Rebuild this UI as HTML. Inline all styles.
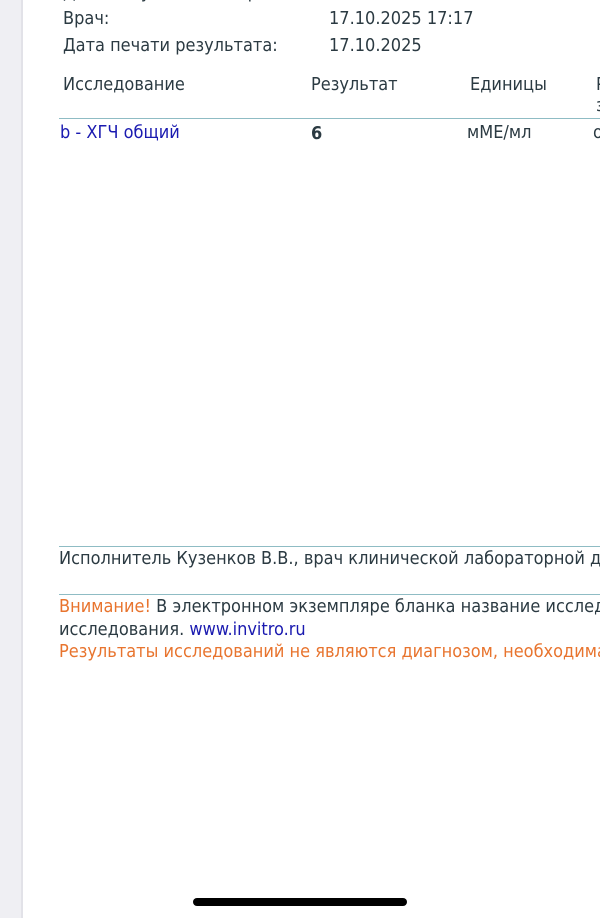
<!DOCTYPE html>
<html><head><meta charset="utf-8"><style>
html,body{margin:0;width:600px;height:918px;overflow:hidden;}
body{background:#fff;position:relative;font-family:Tahoma,"DejaVu Sans Condensed","Liberation Sans",sans-serif;color:#2b3a42;}
.strip{position:absolute;left:0;top:0;width:21px;height:918px;background:#efeff3;border-right:2px solid #e2e2e8;}
.t{position:absolute;white-space:nowrap;font-size:18px;line-height:20px;}
.line{position:absolute;left:59px;width:541px;height:1px;background:#8fbcc4;}
.blue{color:#1a1ab0}
.or{color:#e8742e}
.bar{position:absolute;left:193px;top:898px;width:214px;height:8px;border-radius:4px;background:#000;}
.clip{position:absolute;left:0;top:0;width:600px;height:918px;overflow:hidden;}
</style></head><body>
<div class="clip">
<div class="strip"></div>
<div class="t" style="left:63px;top:-17px">Дата получения материала:</div>
<div class="t" style="left:63px;top:9px">Врач:</div>
<div class="t" style="left:329px;top:9px">17.10.2025 17:17</div>
<div class="t" style="left:63px;top:36px">Дата печати результата:</div>
<div class="t" style="left:329px;top:36px">17.10.2025</div>
<div class="t" style="left:63px;top:75px">Исследование</div>
<div class="t" style="left:311px;top:75px">Результат</div>
<div class="t" style="left:470px;top:75px">Единицы</div>
<div class="t" style="left:596px;top:75px">Р</div>
<div class="t" style="left:596px;top:96px">з</div>
<div class="line" style="top:118px"></div>
<div class="t blue" style="left:60px;top:123px">b - ХГЧ общий</div>
<div class="t" style="left:311px;top:124px;font-weight:bold">6</div>
<div class="t" style="left:467px;top:123px">мМЕ/мл</div>
<div class="t" style="left:593px;top:123px">о</div>
<div class="line" style="top:546px"></div>
<div class="t" style="left:59px;top:549px">Исполнитель Кузенков В.В., врач клинической лабораторной диагностики</div>
<div class="line" style="top:594px"></div>
<div class="t" style="left:59px;top:597px"><span class="or">Внимание!</span> В электронном экземпляре бланка название исследования</div>
<div class="t" style="left:59px;top:620px">исследования. <span class="blue">www.invitro.ru</span></div>
<div class="t or" style="left:59px;top:642px">Результаты исследований не являются диагнозом, необходима консультация</div>
<div class="bar"></div>
</div>
</body></html>
